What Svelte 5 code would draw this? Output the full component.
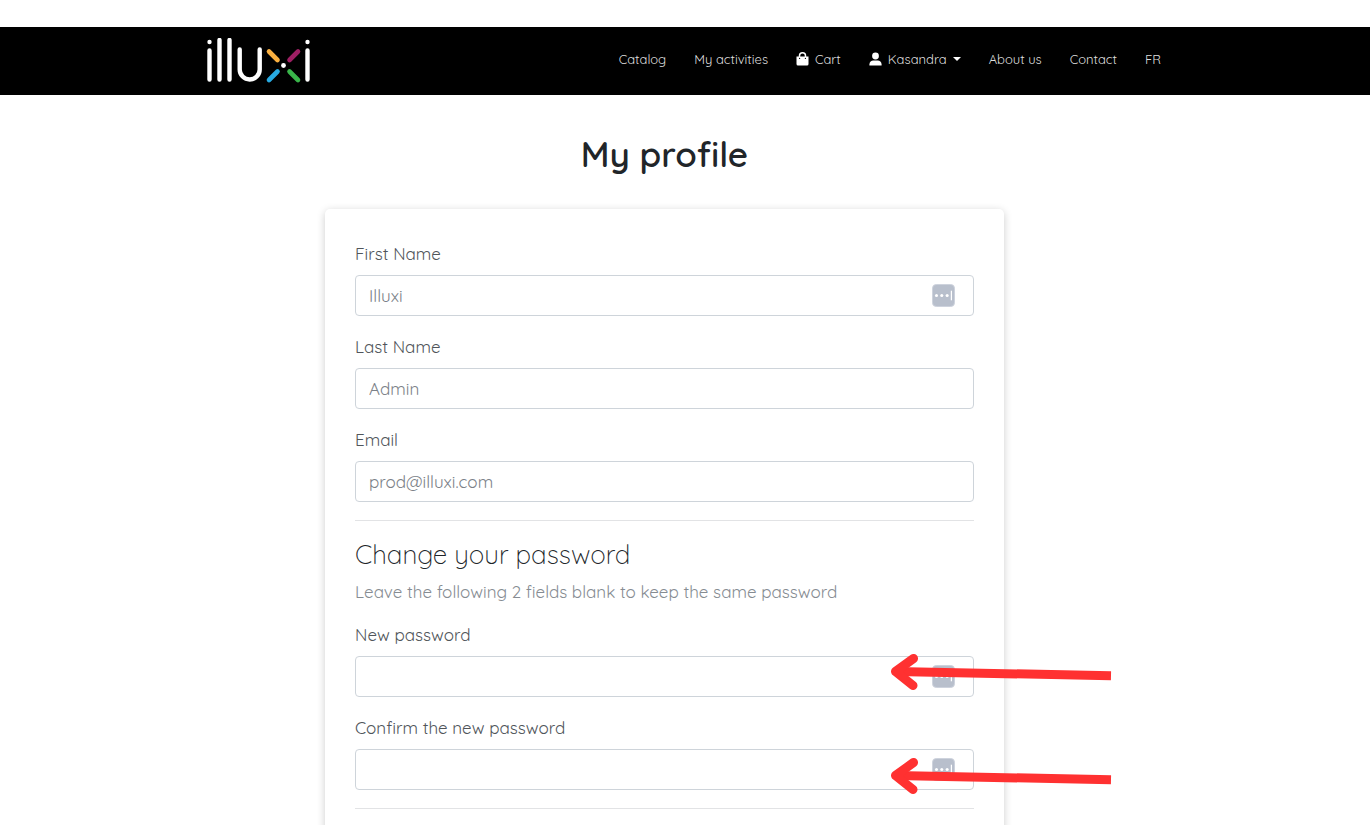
<script>
let profile = {
    firstName: "Illuxi",
    lastName: "Admin",
    email: "prod@illuxi.com",
    password: "",
    confirmPassword: ""
};
</script>

{#snippet managerIcon()}
<svg class="manager" viewBox="0 0 24 24" aria-hidden="true">
    <rect x="0.5" y="0.5" width="23" height="23" rx="4" fill="#b8bfcc" stroke="#cdd2dc" />
    <circle cx="4.7" cy="12" r="1.6" fill="#fff" />
    <circle cx="10.2" cy="12" r="1.6" fill="#fff" />
    <circle cx="15.8" cy="12" r="1.6" fill="#fff" />
    <rect x="19.6" y="7" width="1.3" height="10" fill="#fff" />
</svg>
{/snippet}

{#snippet arrow(low)}
<svg class="arrow" class:low viewBox="0 0 222 38" aria-hidden="true">
    <path d="M6 17.5 L221 21.7" stroke="#ff3131" stroke-width="9" fill="none" />
    <path d="M23.5 4.5 L5.5 17.5 L23 31.5" stroke="#ff3131" stroke-width="9" stroke-linecap="round" stroke-linejoin="round" fill="none" />
</svg>
{/snippet}

<div class="page">

<header>
<div class="bar">
    <a class="logo" href="#home" aria-label="illuxi">
        <svg viewBox="0 0 104 46" fill="none" stroke-linecap="round" stroke-width="4.6">
            <g stroke="#fff" stroke-width="4.4">
                <path d="M2.5 12.5V41.5M12.5 2V41.5M22.5 2V41.5M100.5 12.5V41.5" />
                <path d="M32.7 11.5V31.5a10 10 0 0 0 20 0V11.5" />
            </g>
            <g fill="#fff">
                <circle cx="2.5" cy="4" r="2.2" />
                <circle cx="100.5" cy="4" r="2.2" />
                <circle cx="76.5" cy="27.5" r="2.4" />
            </g>
            <path d="M62 13.5L70.5 22" stroke="#fbb040" />
            <path d="M91 13.5L82.5 22" stroke="#9e1f63" />
            <path d="M70.5 33.5L62 42" stroke="#27aae1" />
            <path d="M82.5 33.5L91 42" stroke="#39b54a" />
        </svg>
    </a>

    <nav>
        <a href="#catalog">Catalog</a>
        <a href="#activities">My activities</a>
        <a href="#cart">
            <svg class="icon" viewBox="0 0 13 14">
                <path d="M3.5 5V3.8a3 3 0 0 1 6 0V5" fill="none" stroke="#fff" stroke-width="1.5" />
                <path d="M.5 4.5h12V12a1.5 1.5 0 0 1-1.5 1.5H2A1.5 1.5 0 0 1 .5 12z" fill="#fff" />
                <circle cx="3.6" cy="6.4" r=".6" />
                <circle cx="9.4" cy="6.4" r=".6" />
            </svg>
            Cart
        </a>
        <button type="button">
            <svg class="icon" viewBox="0 0 13 14">
                <circle cx="6.5" cy="4" r="3.4" fill="#fff" />
                <path d="M.4 13.5v-1C.4 10 2.4 8.8 4.2 8.6h4.6c1.8.2 3.8 1.4 3.8 3.9v1z" fill="#fff" />
            </svg>
            Kasandra
            <span class="caret"></span>
        </button>
        <a href="#about">About us</a>
        <a href="#contact">Contact</a>
        <a href="#fr">FR</a>
    </nav>
</div>
</header>

<main>
<h1>My profile</h1>

<form>
    <label for="firstName">First Name</label>
    <div class="field">
        <input id="firstName" type="text" bind:value={profile.firstName}>
        {@render managerIcon()}
    </div>

    <label for="lastName">Last Name</label>
    <div class="field">
        <input id="lastName" type="text" bind:value={profile.lastName}>
    </div>

    <label for="email">Email</label>
    <div class="field">
        <input id="email" type="email" bind:value={profile.email}>
    </div>

    <hr>

    <h2>Change your password</h2>
    <p>Leave the following 2 fields blank to keep the same password</p>

    <label for="password">New password</label>
    <div class="field">
        <input id="password" type="password" bind:value={profile.password}>
        {@render managerIcon()}
        {@render arrow(false)}
    </div>

    <label for="confirmPassword">Confirm the new password</label>
    <div class="field">
        <input id="confirmPassword" type="password" bind:value={profile.confirmPassword}>
        {@render managerIcon()}
        {@render arrow(true)}
    </div>

    <hr>
</form>
</main>

</div>

<style>

:global(body){
margin:0;
background:white;
}

.page{
height:100vh;
overflow:hidden;
box-sizing:border-box;
padding-top:27px;
font-family:Quicksand, Lato, sans-serif;
font-size:17px;
color:#212529;
}

header{
background:black;
}

.bar{
display:flex;
align-items:center;
justify-content:space-between;
max-width:956px;
height:68px;
margin:0 auto;
}

.logo{
display:flex;
}

.logo svg{
width:104px;
height:46px;
}

nav{
display:flex;
gap:28px;
padding:0 2px 4px 0;
}

nav a, nav button{
display:flex;
align-items:center;
gap:6px;
padding:0;
border:none;
background:none;
font-family:inherit;
font-size:13px;
line-height:20px;
color:#dedede;
text-decoration:none;
white-space:nowrap;
}

nav button{
cursor:pointer;
}

.icon{
width:13px;
height:14px;
}

.caret{
border-top:4px solid white;
border-left:4px solid transparent;
border-right:4px solid transparent;
}

main{
padding-right:41px;
}

h1{
margin:35px 0 31px;
font-size:35px;
font-weight:600;
line-height:48px;
text-align:center;
}

form{
max-width:619px;
margin:0 auto;
padding:32px 30px;
border-radius:5px;
background:white;
box-shadow:0 2px 8px rgba(0,0,0,0.2);
}

label{
display:block;
margin-bottom:9px;
line-height:25px;
font-weight:400;
color:#50555a;
}

.field{
position:relative;
margin-bottom:18px;
}

input{
display:block;
box-sizing:border-box;
width:100%;
height:41px;
padding:0 13px;
border:1px solid #ced4da;
border-radius:4px;
background:white;
font-family:inherit;
font-size:17px;
color:#7b8188;
}

.manager{
position:absolute;
top:9px;
right:19px;
width:23px;
height:23px;
}

.arrow{
position:absolute;
top:-2px;
left:calc(100% - 84px);
width:222px;
height:38px;
}

.arrow.low{
top:9px;
}

hr{
height:1px;
margin:0 0 18px;
border:none;
background:#e2e3e5;
}

h2{
margin:0 0 9px;
font-size:26px;
font-weight:300;
line-height:31px;
}

p{
margin:0 0 18px;
line-height:25px;
color:#868c92;
}

</style>
